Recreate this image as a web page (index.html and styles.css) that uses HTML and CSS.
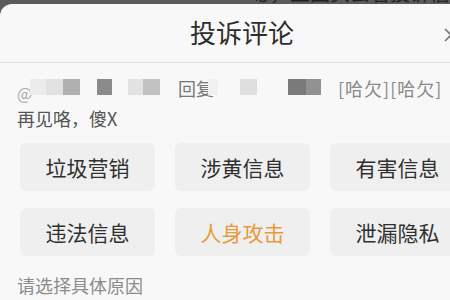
FILE: index.html
```html
<!DOCTYPE html>
<html lang="zh">
<head>
<meta charset="utf-8">
<link rel="stylesheet" href="styles.css">
</head>
<body>
<div class="backdrop"><div class="backdrop-text">嗯，且回头去看投诉信息了吗，有可能看</div></div>
<div class="sheet">
  <div class="header">
    <div class="title">投诉评论</div>
    <svg class="close" width="14" height="14" viewBox="0 0 14 14"><path d="M1 1 L13 13 M13 1 L1 13" stroke="#777" stroke-width="1.6" fill="none"/></svg>
  </div>
  <div class="comment">
    <div class="meta">
      <span class="at">@</span>
      <span class="blk" style="left:13px;width:16px;background:#ececec"></span>
      <span class="blk" style="left:29px;width:17px;background:#e2e2e2"></span>
      <span class="blk" style="left:46px;width:17px;background:#b0b0b0"></span>
      <span class="blk" style="left:80px;width:15px;background:#8a8a8a"></span>
      <span class="blk" style="left:111px;width:15px;background:#e2e2e2"></span>
      <span class="blk" style="left:126px;width:17px;background:#c2c2c2"></span>
      <span class="reply">回复</span>
      <span class="blk" style="left:191px;width:10px;background:#f0f0f0"></span>
      <span class="blk" style="left:223px;width:17px;background:#dedede"></span>
      <span class="blk" style="left:271px;width:18px;background:#7a7a7a"></span>
      <span class="blk" style="left:289px;width:15px;background:#929292"></span>
      <span class="emoji">[哈欠][哈欠]</span>
    </div>
    <div class="text">再见咯，傻X</div>
  </div>
  <div class="grid">
    <div class="btn">垃圾营销</div>
    <div class="btn">涉黄信息</div>
    <div class="btn">有害信息</div>
    <div class="btn">违法信息</div>
    <div class="btn active">人身攻击</div>
    <div class="btn">泄漏隐私</div>
  </div>
  <div class="hint">请选择具体原因</div>
</div>
</body>
</html>
```
FILE: styles.css
```css
html, body {
  margin: 0;
  padding: 0;
  width: 450px;
  height: 300px;
  overflow: hidden;
  background: #5b5b5b;
  font-family: "Noto Sans CJK SC", "Noto Sans", sans-serif;
}
.backdrop {
  height: 4px;
  overflow: hidden;
  padding-left: 250px;
}
.backdrop-text {
  margin-top: -17px;
  font-size: 20px;
  line-height: 20px;
  color: #222;
  white-space: nowrap;
}
.sheet {
  width: 484px;
  height: 296px;
  background: #f8f8f8;
  border-radius: 12px 12px 0 0;
}
.header {
  height: 58px;
  border-bottom: 1px solid #e4e4e4;
  display: flex;
  align-items: center;
  justify-content: center;
  position: relative;
}
.title {
  font-size: 26px;
  color: #2e2e2e;
  line-height: 58px;
  margin-top: -2px;
}
.close {
  position: absolute;
  right: 26px;
  top: 24px;
}
.comment {
  padding-left: 17px;
  padding-top: 15px;
}
.meta {
  position: relative;
  height: 20px;
}
.blk {
  position: absolute;
  top: 1px;
  height: 16px;
}
.at {
  position: absolute;
  left: 0;
  top: 7px;
  font-size: 16px;
  line-height: 16px;
  color: #aaa;
}
.reply {
  position: absolute;
  left: 161px;
  top: -2px;
  font-size: 18px;
  line-height: 24px;
  color: #777;
}
.emoji {
  position: absolute;
  left: 321px;
  top: -2px;
  font-size: 18px;
  line-height: 24px;
  color: #8a8a8a;
  white-space: nowrap;
  letter-spacing: 1px;
}
.text {
  margin-top: 8px;
  font-size: 18px;
  line-height: 24px;
  color: #555;
}
.grid {
  display: grid;
  grid-template-columns: repeat(3, 135px);
  column-gap: 20px;
  row-gap: 17px;
  padding-left: 20px;
  margin-top: 13px;
}
.btn {
  height: 48px;
  background: #efefef;
  border-radius: 6px;
  display: flex;
  align-items: center;
  justify-content: center;
  font-size: 21px;
  color: #2f2f2f;
}
.btn.active {
  color: #e89a3a;
}
.hint {
  padding-left: 17px;
  margin-top: 16px;
  font-size: 18px;
  line-height: 26px;
  color: #8c8c8c;
}
```
